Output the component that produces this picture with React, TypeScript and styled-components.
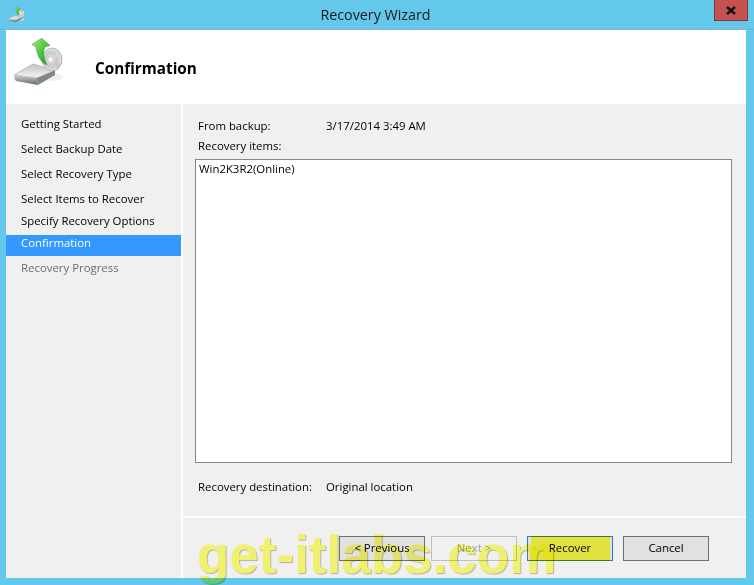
import React from "react";
import styled, { createGlobalStyle } from "styled-components";

const GlobalStyle = createGlobalStyle`
	html, body {
		margin: 0;
		padding: 0;
		background: #63c8ea;
	}
	* {
		box-sizing: border-box;
	}
`;

const Win = styled.div`
	position: relative;
	width: 754px;
	height: 585px;
	overflow: hidden;
	background: #63c8ea;
	display: flex;
	flex-direction: column;
	font-family: "Open Sans", "Noto Sans", sans-serif;
	font-size: 11.4px;
	color: #000;
`;

const TitleBar = styled.div`
	height: 30px;
	flex: none;
	display: grid;
	grid-template-columns: 1fr auto 1fr;
	align-items: start;
	padding: 0 6px 0 8px;
	border-bottom: 1px solid #7fb4c8;
`;

const TitleIcon = styled.div`
	margin-top: 6px;
	width: 17px;
	height: 17px;
`;

const TitleText = styled.div`
	margin: 5px 5px 0 0;
	font-size: 14.3px;
	line-height: 20px;
	color: #1a1a1a;
`;

const CloseBtn = styled.div`
	justify-self: end;
	width: 34px;
	height: 21px;
	background: #c75050;
	border: 1px solid #7d3a3a;
	border-top: 0;
	display: flex;
	align-items: center;
	justify-content: center;
`;

const Client = styled.div`
	flex: 1;
	margin: 0 8px 7px 6px;
	background: #fff;
	display: flex;
	flex-direction: column;
	min-height: 0;
`;

const Header = styled.div`
	height: 74px;
	flex: none;
	display: flex;
	padding-left: 6px;
	background: #fff;
`;

const HeaderIcon = styled.div`
	width: 52px;
	height: 52px;
	margin-top: 6px;
`;

const Heading = styled.h1`
	margin: 28px 0 0 31px;
	font-size: 15.3px;
	line-height: 20px;
	font-weight: 700;
	color: #000;
`;

const Body = styled.div`
	flex: 1;
	display: flex;
	gap: 2px;
	min-height: 0;
`;

const Sidebar = styled.div`
	width: 175px;
	flex: none;
	background: #f0f0f0;
	padding-top: 12px;
	display: flex;
	flex-direction: column;
`;

const Step = styled.div<{ $pitch: number; $active?: boolean; $muted?: boolean }>`
	height: 21px;
	margin-bottom: ${(p) => p.$pitch - 21}px;
	padding-left: 15px;
	line-height: 16px;
	white-space: nowrap;
	background: ${(p) => (p.$active ? "#3399ff" : "transparent")};
	color: ${(p) => (p.$active ? "#fff" : p.$muted ? "#6d6d6d" : "#000")};
`;

const Main = styled.div`
	flex: 1;
	background: #f0f0f0;
	display: flex;
	flex-direction: column;
	min-width: 0;
`;

const Content = styled.div`
	height: 412px;
	flex: none;
	padding: 13px 14px 0 12px;
	display: flex;
	flex-direction: column;
`;

const InfoRow = styled.div`
	display: flex;
	height: 20px;
	line-height: 18px;
	padding-left: 3px;
`;

const InfoLabel = styled.div`
	width: 128px;
	flex: none;
`;

const ListBox = styled.div`
	height: 304px;
	flex: none;
	margin-top: 2px;
	background: #fff;
	border: 1px solid #828790;
	padding: 1px 3px;
	line-height: 16px;
`;

const DestRow = styled(InfoRow)`
	margin-top: 15px;
`;

const Footer = styled.div`
	flex: 1;
	border-top: 2px solid #fff;
	display: flex;
	justify-content: flex-end;
	gap: 6px;
	padding: 18px 37px 0 0;
`;

const Btn = styled.div<{ $primary?: boolean; $disabled?: boolean; $after?: number }>`
	position: relative;
	width: 86px;
	height: 25px;
	padding-bottom: 2px;
	margin-left: ${(p) => p.$after ?? 0}px;
	background: ${(p) => (p.$disabled ? "#f0f0f0" : "#e1e1e1")};
	border: 1px solid ${(p) => (p.$primary ? "#2f7fc1" : p.$disabled ? "#bfbfbf" : "#707070")};
	color: ${(p) => (p.$disabled ? "#a0a0a0" : "#000")};
	display: flex;
	align-items: center;
	justify-content: center;
	line-height: 16px;
`;

const Highlight = styled.div`
	position: absolute;
	left: 3px;
	right: 2px;
	top: -1px;
	bottom: -1px;
	background: #ffff48;
	mix-blend-mode: multiply;
`;

const BtnLabel = styled.span`
	position: relative;
`;

const Watermark = styled.div`
	position: absolute;
	left: 197px;
	top: 525px;
	font-family: "Liberation Sans", Arial, sans-serif;
	font-size: 53px;
	line-height: 60px;
	font-weight: 700;
	white-space: nowrap;
	color: #ffff78;
	mix-blend-mode: multiply;
	text-shadow: 1px 1px 1px rgba(150, 150, 120, 0.6);
	pointer-events: none;
`;

function BackupIcon({ id }: { id: string }) {
	return (
		<svg width='100%' height='100%' viewBox='12 36 52 52' style={{ display: "block" }}>
			<defs>
				<linearGradient id={`${id}-top`} x1='0' y1='0' x2='0' y2='1'>
					<stop offset='0' stopColor='#c4c4c4' />
					<stop offset='1' stopColor='#f4f4f4' />
				</linearGradient>
				<linearGradient id={`${id}-side`} x1='0' y1='0' x2='0' y2='1'>
					<stop offset='0' stopColor='#d2d2d2' />
					<stop offset='1' stopColor='#666666' />
				</linearGradient>
				<radialGradient id={`${id}-cd`} cx='0.45' cy='0.5' r='0.6'>
					<stop offset='0' stopColor='#f8f8f8' />
					<stop offset='0.45' stopColor='#c6c8cc' />
					<stop offset='0.8' stopColor='#dcdde0' />
					<stop offset='1' stopColor='#9ea3a8' />
				</radialGradient>
				<linearGradient id={`${id}-arrow`} x1='0' y1='0' x2='1' y2='1'>
					<stop offset='0' stopColor='#a6ea6a' />
					<stop offset='0.6' stopColor='#3fbf3a' />
					<stop offset='1' stopColor='#0f8a1c' />
				</linearGradient>
			</defs>
			<ellipse cx='52' cy='77' rx='11' ry='4' fill='#e6e6e6' opacity='0.6' />
			<path d='M14 75 L33 64 L55 70.5 L37 78 Z' fill={`url(#${id}-top)`} stroke='#909090' strokeWidth='0.5' />
			<path d='M14 75 L37 78 L38 85 L16 81 Q14 79 14 75 Z' fill={`url(#${id}-side)`} />
			<path d='M37 78 L55 70.5 L55 75 L38 85 Z' fill='#858585' />
			<rect x='36' y='78.5' width='1.6' height='3.8' fill='#35c92f' />
			<ellipse cx='52' cy='59.5' rx='10' ry='11.5' fill={`url(#${id}-cd)`} stroke='#8f949a' strokeWidth='0.5' />
			<path d='M54 61 L60.5 63.5 A10 11.5 0 0 1 56.5 68.5 Z' fill='#e8b8cc' />
			<path d='M53 56 L59.5 52 A10 11.5 0 0 1 61 57.5 Z' fill='#d5dfc0' />
			<ellipse cx='50.5' cy='59.5' rx='2.6' ry='3' fill='#fafafa' stroke='#999' strokeWidth='0.5' />
			<path
				d='M41.7 38.2 L50 45.5 L45 46.8 Q41.5 54 46.8 65 Q37.5 61 36 46.8 L32 44.5 Z'
				fill={`url(#${id}-arrow)`}
				stroke='#2a9a2a'
				strokeWidth='0.5'
			/>
		</svg>
	);
}

const steps = [
	{ label: "Getting Started", pitch: 25 },
	{ label: "Select Backup Date", pitch: 25 },
	{ label: "Select Recovery Type", pitch: 25 },
	{ label: "Select Items to Recover", pitch: 22 },
	{ label: "Specify Recovery Options", pitch: 22 },
	{ label: "Confirmation", pitch: 25, active: true },
	{ label: "Recovery Progress", pitch: 21, muted: true },
];

export default function App() {
	return (
		<>
			<GlobalStyle />
			<Win>
				<TitleBar>
					<TitleIcon>
						<BackupIcon id='small' />
					</TitleIcon>
					<TitleText>Recovery Wizard</TitleText>
					<CloseBtn>
						<svg width='10' height='9' viewBox='0 0 10 9'>
							<path d='M1 1 L9 8 M9 1 L1 8' stroke='#111' strokeWidth='2.4' />
						</svg>
					</CloseBtn>
				</TitleBar>
				<Client>
					<Header>
						<HeaderIcon>
							<BackupIcon id='large' />
						</HeaderIcon>
						<Heading>Confirmation</Heading>
					</Header>
					<Body>
						<Sidebar>
							{steps.map((s) => (
								<Step key={s.label} $pitch={s.pitch} $active={s.active} $muted={s.muted}>
									{s.label}
								</Step>
							))}
						</Sidebar>
						<Main>
							<Content>
								<InfoRow>
									<InfoLabel>From backup:</InfoLabel>
									<span>3/17/2014 3:49 AM</span>
								</InfoRow>
								<InfoRow>
									<InfoLabel>Recovery items:</InfoLabel>
								</InfoRow>
								<ListBox>Win2K3R2(Online)</ListBox>
								<DestRow>
									<InfoLabel>Recovery destination:</InfoLabel>
									<span>Original location</span>
								</DestRow>
							</Content>
							<Footer>
								<Btn>&lt; Previous</Btn>
								<Btn $disabled>Next &gt;</Btn>
								<Btn $primary $after={4}>
									<BtnLabel>Recover</BtnLabel>
									<Highlight />
								</Btn>
								<Btn $after={4}>Cancel</Btn>
							</Footer>
						</Main>
					</Body>
				</Client>
				<Watermark>get-itlabs.com</Watermark>
			</Win>
		</>
	);
}
